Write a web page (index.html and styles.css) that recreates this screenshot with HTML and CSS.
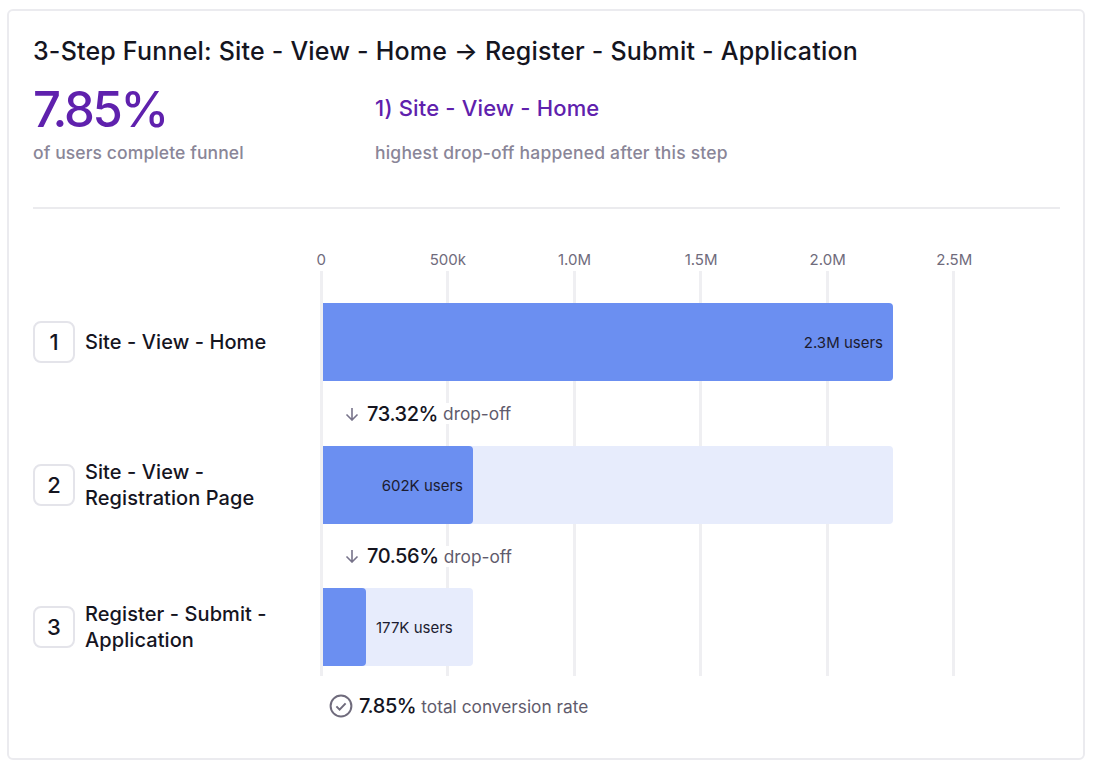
FILE: index.html
```html
<!DOCTYPE html>
<html lang="en">
<head>
<meta charset="utf-8">
<title>3-Step Funnel</title>
<link rel="stylesheet" href="styles.css">
</head>
<body>
<main class="card">
  <h1 class="title">3-Step Funnel: Site - View - Home → Register - Submit - Application</h1>
  <section class="stats">
    <div class="stat stat-main">
      <div class="big">7.85%</div>
      <div class="sub">of users complete funnel</div>
    </div>
    <div class="stat">
      <div class="step-name">1) Site - View - Home</div>
      <div class="sub">highest drop-off happened after this step</div>
    </div>
  </section>
  <hr class="divider">
  <section class="chart">
    <div class="gridlines">
      <i></i><i></i><i></i><i></i><i></i><i></i>
    </div>
    <div class="axis">
      <span>0</span><span>500k</span><span>1.0M</span><span>1.5M</span><span>2.0M</span><span>2.5M</span>
    </div>
    <div class="row">
      <div class="label"><span class="num">1</span><span class="name">Site - View - Home</span></div>
      <div class="track" style="width:570px">
        <div class="fill" style="width:570px"><span class="count">2.3M users</span></div>
      </div>
    </div>
    <div class="drop">
      <svg class="arrow" viewBox="0 0 14 14" width="14" height="14"><path d="M7 1V13M1.5 7.5 7 13l5.5-5.5"/></svg>
      <b>73.32%</b><span>drop-off</span>
    </div>
    <div class="row">
      <div class="label"><span class="num">2</span><span class="name">Site - View -<br>Registration Page</span></div>
      <div class="track pale" style="width:570px">
        <div class="fill" style="width:150px"><span class="count">602K users</span></div>
      </div>
    </div>
    <div class="drop drop-second">
      <svg class="arrow" viewBox="0 0 14 14" width="14" height="14"><path d="M7 1V13M1.5 7.5 7 13l5.5-5.5"/></svg>
      <b>70.56%</b><span>drop-off</span>
    </div>
    <div class="row">
      <div class="label"><span class="num">3</span><span class="name">Register - Submit -<br>Application</span></div>
      <div class="track pale" style="width:150px">
        <div class="fill" style="width:43px"></div>
        <span class="count outside">177K users</span>
      </div>
    </div>
    <div class="total">
      <svg class="check" viewBox="0 0 24 24" width="24" height="24"><circle cx="12" cy="12" r="10.4"/><path d="M7.4 12.4l3.2 3.2 6-6.2"/></svg>
      <b>7.85%</b><span>total conversion rate</span>
    </div>
  </section>
</main>
</body>
</html>
```
FILE: styles.css
```css
* { box-sizing: border-box; }
html, body { margin: 0; height: 100%; background: #fff; }
body {
  padding: 9px 15px 13px 7px;
  font-family: Inter, "Liberation Sans", sans-serif;
  color: #15151f;
}
.card {
  height: 751px;
  padding: 24px 23px 0 24px;
  border: 2px solid #ebebef;
  border-radius: 6px;
  background: #fff;
}
.title {
  margin: 0;
  font-size: 25px;
  line-height: 32px;
  font-weight: 450;
  letter-spacing: 0.2px;
}
.stats { display: flex; margin-top: 14px; height: 126px; }
.stat-main { width: 342px; }
.big {
  height: 54px;
  font-size: 49px;
  line-height: 58px;
  font-weight: 500;
  letter-spacing: -2.3px;
  color: #5f21ad;
}
.step-name {
  height: 54px;
  font-size: 22px;
  line-height: 54px;
  font-weight: 450;
  letter-spacing: 0.16px;
  color: #5f21ad;
}
.sub {
  margin-top: 8px;
  font-size: 17.5px;
  line-height: 20px;
  font-weight: 500;
  letter-spacing: 0.1px;
  color: #8a8698;
}
.stat-main + .stat .sub { letter-spacing: 0.2px; }
.divider {
  margin: 0;
  border: 0;
  border-top: 2px solid #ebebee;
}
.chart { position: relative; padding-top: 40px; }
.gridlines {
  position: absolute;
  left: 287px;
  top: 62px;
  height: 405px;
  display: flex;
}
.gridlines i {
  width: 126.4px;
  border-left: 3px solid #efeff2;
}
.axis {
  display: flex;
  position: relative;
  margin-left: 225px;
  height: 22px;
}
.axis span {
  width: 126.6px;
  text-align: center;
  font-size: 15px;
  line-height: 22px;
  color: #6f6b7c;
}
.row {
  position: relative;
  display: flex;
  align-items: stretch;
  height: 78px;
}
.axis + .row { margin-top: 32px; }
.label {
  width: 290px;
  display: flex;
  align-items: center;
  gap: 10px;
}
.num {
  flex: none;
  width: 42px;
  height: 42px;
  display: flex;
  align-items: center;
  justify-content: center;
  border: 2px solid #e4e4ea;
  border-radius: 8px;
  font-size: 22px;
  font-weight: 500;
}
.name { font-size: 20px; line-height: 26.5px; font-weight: 450; letter-spacing: 0.08px; }
.track {
  display: flex;
  height: 78px;
  border-radius: 0 4px 4px 0;
}
.pale { background: #e7ecfc; }
.fill {
  display: flex;
  align-items: center;
  justify-content: flex-end;
  padding-right: 10px;
  background: #6b8ff1;
  border-radius: 0 4px 4px 0;
}
.count { font-size: 15px; color: #1c1c30; white-space: nowrap; }
.outside { align-self: center; margin-left: 10px; }
.drop {
  position: relative;
  display: flex;
  align-items: center;
  height: 65px;
  margin-left: 312px;
}
.drop-second { height: 64px; }
.drop b, .total b {
  font-size: 20px;
  font-weight: 500;
  letter-spacing: -0.4px;
  margin-right: 5px;
  background: #fff;
}
.drop span, .total span {
  font-size: 17.3px;
  color: #5f5b6c;
  background: #fff;
}
.arrow { margin-right: 8px; background: #fff; }
.arrow path { fill: none; stroke: #77738a; stroke-width: 1.6; }
.total {
  position: relative;
  display: flex;
  align-items: center;
  margin: 23px 0 0 296px;
  height: 34px;
}
.check { margin-right: 6px; }
.check circle, .check path { fill: none; stroke: #6f6b7c; stroke-width: 2; }
```
